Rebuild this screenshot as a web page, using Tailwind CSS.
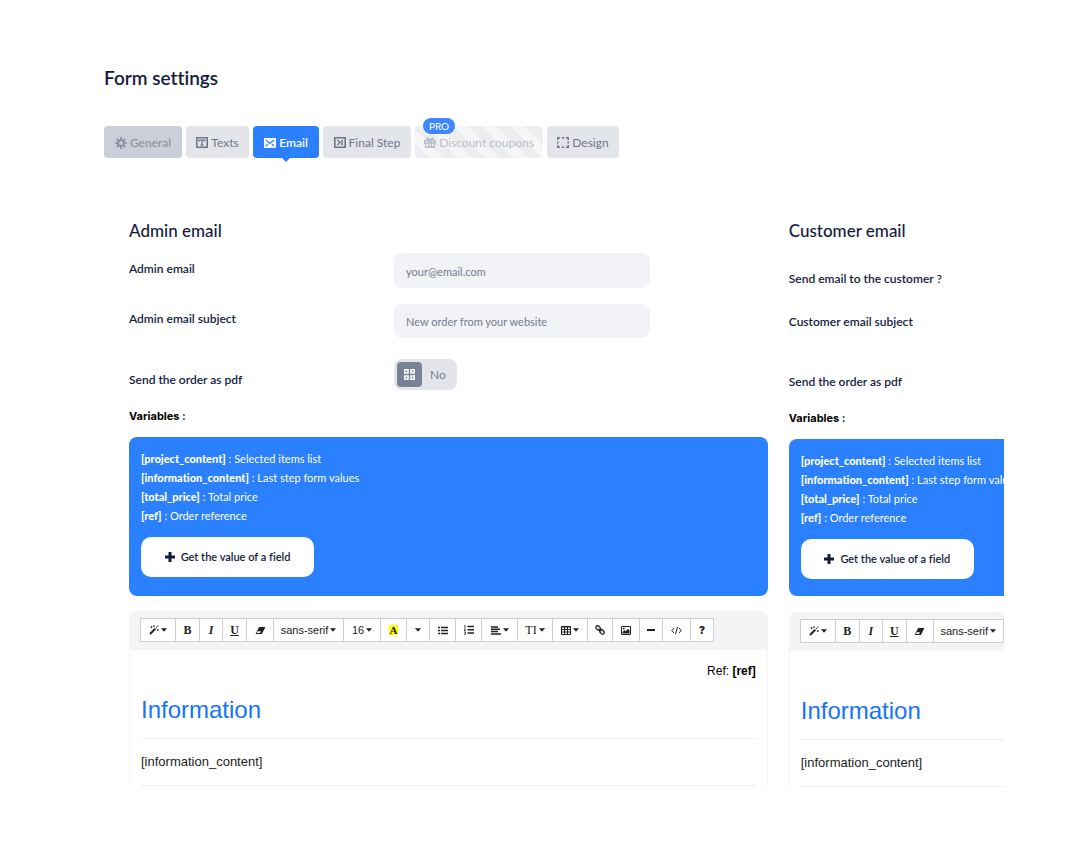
<!DOCTYPE html>
<html lang="en">
<head>
<meta charset="utf-8">
<meta name="viewport" content="width=device-width, initial-scale=1">
<title>Form settings</title>
<script src="https://cdn.jsdelivr.net/npm/@tailwindcss/browser@4"></script>
</head>
<body class="bg-white font-[Lato,sans-serif] text-[#131b3d] [font-variant-ligatures:none]">
<svg class="hidden" aria-hidden="true">
  <symbol id="wand" viewBox="0 0 12 12"><path d="M1.2 10.8 7.5 4.5" stroke="currentColor" stroke-width="2.400"/><path d="M8 4 10 2M3 1.5v2M2 2.500h2M6 .6v1.600M5.200 1.400h1.600M10.500 5v2M9.500 6h2M10.800 .6v1.200" stroke="currentColor" stroke-width="1.200"/></symbol>
  <symbol id="caret" viewBox="0 0 6 4"><path d="M0 .3h6L3 3.700z" fill="currentColor"/></symbol>
  <symbol id="eraser" viewBox="0 0 12 10"><path d="M4.500 1h7L7.500 9h-7z" fill="currentColor"/><path d="M2.900 5.900h3.600L5.500 7.800H1.900z" fill="#fff"/></symbol>
  <symbol id="plus" viewBox="0 0 10 10"><path d="M3.500 0h3v3.500H10v3H6.500V10h-3V6.500H0v-3h3.500z" fill="currentColor"/></symbol>
</svg>
<main class="pt-[66px] pl-[104px] pr-[68px]">
  <h1 class="text-[19px] leading-6 font-semibold">Form settings</h1>
  <nav class="mt-9 flex gap-1 text-[12px] text-[#6f768b] [&>button]:pt-px">
    <button class="flex h-8 w-[78px] items-center justify-center gap-[3px] rounded bg-[#cbcfd9] text-[#858ca0]">
      <svg class="size-3" viewBox="0 0 12 12" fill="none" stroke="currentColor"><circle cx="6" cy="6" r="2.900" stroke-width="1.900"/><path d="M6 0v2.500M6 9.500V12M0 6h2.500M9.500 6H12M1.800 1.800l1.700 1.700M8.500 8.500l1.700 1.700M1.800 10.200l1.700-1.700M8.500 3.500l1.700-1.700" stroke-width="1.700"/></svg>General</button>
    <button class="flex h-8 w-[63px] items-center justify-center gap-[3px] rounded bg-[#e4e5eb]">
      <svg class="h-[11px] w-3" viewBox="0 0 12 11" fill="none" stroke="currentColor"><path d="M.800 .800h10.400v9.400H.800z" stroke-width="1.600"/><path d="M3.200 4.500V3.200h5.600v1.300M6 3v5.500M4.500 8.200h3" stroke-width="1.300"/></svg>Texts</button>
    <button class="relative flex h-8 w-[66px] items-center justify-center gap-[3px] rounded bg-[#2a80ff] font-semibold text-white">
      <svg class="h-[10px] w-3" viewBox="0 0 12 10"><path d="M0 0h12v10H0z" fill="#fff"/><path d="m2 2 4 3.500L10 2M2 8l2-2M10 8 8 6" fill="none" stroke="#2a80ff" stroke-width="1.200"/></svg>Email
      <svg class="absolute top-full left-[29px] -mt-px h-[5px] w-2" viewBox="0 0 8 5"><path d="M0 0h8v1L4 5 0 1z" fill="#2a80ff"/></svg></button>
    <button class="flex h-8 w-[88px] items-center justify-center gap-[3px] rounded bg-[#e4e5eb]">
      <svg class="h-[11px] w-3" viewBox="0 0 12 11" fill="none" stroke="currentColor"><path d="M.800 .800h10.400v9.400H.800z" stroke-width="1.600"/><path d="m3.500 3 2.500 2.500L3.500 8M8 2.800v5.400" stroke-width="1.400"/></svg>Final Step</button>
    <button class="relative flex h-8 w-[128px] items-center justify-center gap-[3px] rounded bg-[repeating-linear-gradient(45deg,#ededf0_0px,#ededf0_10px,#f5f6f8_10px,#f5f6f8_20px)] text-[#b9bdc9]">
      <svg class="h-[11px] w-3" viewBox="0 0 12 11" fill="none" stroke="currentColor" stroke-width="1.400"><path d="M.700 3.600h10.600V6H.700zM1.600 6v4.300h8.800V6M4.700 3.600v6.700M7.300 3.600v6.700M6 3.200C4 .2 2.500.4 3 2.400l3 .8 3-.8C9.500.4 8 .2 6 3.200"/></svg>Discount coupons
      <span class="absolute -top-2 left-2 h-4 w-8 rounded-full bg-[#3f87ff] text-center text-[10px] leading-4 text-white">PRO</span></button>
    <button class="flex h-8 w-[72px] items-center justify-center gap-[3px] rounded bg-[#e4e5eb]">
      <svg class="h-[11px] w-3" viewBox="0 0 12 11" fill="none" stroke="currentColor" stroke-width="1.500"><path d="M3 .8H.8V3M9 .8h2.200V3M.8 8v2.200H3M11.200 8v2.200H9M4.800.8h2.400M4.800 10.200h2.400M.8 4.500v2M11.200 4.500v2"/></svg>Design</button>
  </nav>

  <div class="mt-[61px] flex h-[568px] gap-[21px] overflow-hidden pl-[25px]">
    <section class="flex w-[73%] shrink-0 flex-col">
      <h2 class="text-[17px] leading-6 font-medium">Admin email</h2>
      <div class="mt-[10px] flex items-start">
        <label for="mail" class="w-[265px] pt-2 text-[12px] leading-4 font-semibold">Admin email</label>
        <input id="mail" type="email" placeholder="your@email.com" class="h-[35px] w-[40%] rounded-lg bg-[#f2f3f6] px-3 pt-px text-[11px] placeholder:text-[#737b90]">
      </div>
      <div class="mt-4 flex items-start">
        <label for="subject" class="w-[265px] pt-[7px] text-[12px] leading-4 font-semibold">Admin email subject</label>
        <input id="subject" type="text" placeholder="New order from your website" class="h-[34px] w-[40%] rounded-lg bg-[#f2f3f6] px-3 pt-px text-[11px] placeholder:text-[#737b90]">
      </div>
      <div class="mt-[21px] flex items-start">
        <label for="pdf" class="w-[265px] pt-[13px] text-[12px] leading-4 font-semibold">Send the order as pdf</label>
        <label class="flex h-[31px] w-[63px] items-center gap-2 rounded-lg bg-[#e4e5eb] pl-[3px] text-[12px] text-[#737b90]">
          <input id="pdf" type="checkbox" class="sr-only">
          <span class="flex size-[25px] items-center justify-center rounded bg-[#788196]"><svg class="size-[11px]" viewBox="0 0 11 11" fill="none" stroke="#fff" stroke-width="1.600"><path d="M.8.8h3.200v3.200H.8zM7 .8h3.200v3.200H7zM.8 7h3.200v3.200H.8zM7 7h3.200v3.200H7z"/></svg></span>No</label>
      </div>
      <p class="mt-[18px] font-[Inter,sans-serif] text-[11px] leading-4 font-bold text-black">Variables :</p>
      <div class="mt-[13px] h-[159px] rounded-lg bg-[#2a80ff] px-3 pt-3 text-[11px] text-white">
        <ul class="leading-[19px]">
          <li><b class="font-black">[project_content]</b> : Selected items list</li>
          <li><b class="font-black">[information_content]</b> : Last step form values</li>
          <li><b class="font-black">[total_price]</b> : Total price</li>
          <li><b class="font-black">[ref]</b> : Order reference</li>
        </ul>
        <button class="mt-3 flex h-10 w-[173px] items-center justify-center gap-[6px] rounded-[10px] bg-white font-semibold text-[#131b3d]"><svg class="size-[10px]"><use href="#plus"/></svg>Get the value of a field</button>
      </div>
      <div class="mt-[15px] h-[39px] rounded-t-lg bg-[#f4f4f5] px-[11px] pt-[7px]">
        <div class="flex h-6 text-[10px] text-[#222] [&>button]:flex [&>button]:shrink-0 [&>button]:items-center [&>button]:justify-center [&>button]:gap-[2px] [&>button]:border-y [&>button]:border-r [&>button]:border-[#cfcfcf] [&>button]:bg-white">
          <button aria-label="Style" class="w-9 border-l"><svg class="size-[10px]"><use href="#wand"/></svg><svg class="h-1 w-[6px]"><use href="#caret"/></svg></button>
          <button class="w-6 font-['Liberation_Serif',serif] text-[12px] font-bold">B</button>
          <button class="w-[23px] font-['Liberation_Serif',serif] text-[12px] font-bold italic">I</button>
          <button class="w-6 font-['Liberation_Serif',serif] text-[12px] font-bold underline">U</button>
          <button aria-label="Clear" class="w-[27px]"><svg class="h-[9px] w-[11px]"><use href="#eraser"/></svg></button>
          <button class="w-[70px] font-['Liberation_Sans',sans-serif] text-[11px]">sans-serif<svg class="h-1 w-[6px]"><use href="#caret"/></svg></button>
          <button class="w-[37px] font-['Liberation_Sans',sans-serif] text-[11px]">16<svg class="h-1 w-[6px]"><use href="#caret"/></svg></button>
          <button class="w-[26px] font-['Liberation_Serif',serif] text-[11px] font-bold"><span class="bg-[#ff0] px-px leading-[10px]">A</span></button>
          <button aria-label="More colors" class="w-[23px]"><svg class="h-1 w-[6px]"><use href="#caret"/></svg></button>
          <button aria-label="Bullets" class="w-[26px]"><svg class="h-[9px] w-[10px]" viewBox="0 0 10 9" stroke="currentColor" stroke-width="1.500"><path d="M0 1.500h2M3 1.500h7M0 4.500h2M3 4.500h7M0 7.500h2M3 7.500h7"/></svg></button>
          <button aria-label="Numbers" class="w-[26px]"><svg class="h-[10px] w-[10px]" viewBox="0 0 10 10" fill="none" stroke="currentColor"><path d="M3.500 1.500H10M3.500 4.700H10M3.500 8H10" stroke-width="1.500"/><path d="M0 .6h1v2.400M0 4h1.500L.3 5.700h1.500M0 7h1.500v2.400H0" stroke-width=".8"/></svg></button>
          <button aria-label="Align" class="w-9"><svg class="h-[9px] w-[10px]" viewBox="0 0 10 9" stroke="currentColor" stroke-width="1.500"><path d="M0 1h7M0 3.300h9M0 5.600h7M0 8h10"/></svg><svg class="h-1 w-[6px]"><use href="#caret"/></svg></button>
          <button class="w-[35px] font-['Liberation_Serif',serif] text-[12px]">TI<svg class="h-1 w-[6px]"><use href="#caret"/></svg></button>
          <button aria-label="Table" class="w-[35px]"><svg class="h-[9px] w-[10px]" viewBox="0 0 10 9" fill="none" stroke="currentColor"><path d="M.5.5h9v8h-9zM0 1h10M.5 3.500h9M.5 6h9M3.500 1v7M6.500 1v7"/></svg><svg class="h-1 w-[6px]"><use href="#caret"/></svg></button>
          <button aria-label="Link" class="w-[25px]"><svg class="size-[10px]" viewBox="0 0 10 10" fill="none" stroke="currentColor" stroke-width="1.300"><g transform="rotate(45 5 5)"><rect x="-.2" y="3.200" width="5" height="3.400" rx="1.700"/><rect x="5.200" y="3.200" width="5" height="3.400" rx="1.700"/><path d="M3 5h4"/></g></svg></button>
          <button aria-label="Picture" class="w-[27px]"><svg class="h-[9px] w-[10px]" viewBox="0 0 10 9"><path d="M.5.5h9v8h-9z" fill="none" stroke="currentColor"/><path d="M1.500 7.500V6l2-2 1.200 1.200L7 2.800l1.500 1.700v3z" fill="currentColor"/><circle cx="2.800" cy="2.500" r=".9" fill="currentColor"/></svg></button>
          <button aria-label="Line" class="w-[23px]"><svg class="h-[2px] w-2" viewBox="0 0 8 2"><path d="M0 0h8v2H0z" fill="currentColor"/></svg></button>
          <button aria-label="Code" class="w-7"><svg class="h-[9px] w-[11px]" viewBox="0 0 11 9" fill="none" stroke="currentColor"><path d="M3 2 .8 4.500 3 7M8 2l2.200 2.500L8 7M6.500 .800l-2 7.400"/></svg></button>
          <button class="w-[23px] font-[Inter,sans-serif] font-black">?</button>
        </div>
      </div>
      <div class="flex-1 border-x border-[#f4f4f5] px-[11px] font-['Liberation_Sans',sans-serif] text-black">
        <p class="pt-3 text-right text-[12px] leading-[18px]">Ref: <b>[ref]</b></p>
        <h3 class="mt-[14px] text-[24px] leading-8 text-[#1673ff]">Information</h3>
        <hr class="mt-3 border-[#efefef]">
        <p class="mt-[14px] text-[13px] leading-[18px] text-[#222]">[information_content]</p>
        <hr class="mt-[14px] border-[#efefef]">
      </div>
    </section>

    <section class="flex w-[73%] shrink-0 flex-col">
      <h2 class="text-[17px] leading-6 font-medium">Customer email</h2>
      <p class="mt-7 text-[12px] leading-4 font-semibold">Send email to the customer ?</p>
      <p class="mt-[27px] text-[12px] leading-4 font-semibold">Customer email subject</p>
      <p class="mt-11 text-[12px] leading-4 font-semibold">Send the order as pdf</p>
      <p class="mt-5 font-[Inter,sans-serif] text-[11px] leading-4 font-bold text-black">Variables :</p>
      <div class="mt-[13px] h-[159px] rounded-lg bg-[#2a80ff] px-3 pt-3 text-[11px] text-white">
        <ul class="leading-[19px]">
          <li><b class="font-black">[project_content]</b> : Selected items list</li>
          <li><b class="font-black">[information_content]</b> : Last step form values</li>
          <li><b class="font-black">[total_price]</b> : Total price</li>
          <li><b class="font-black">[ref]</b> : Order reference</li>
        </ul>
        <button class="mt-3 flex h-10 w-[173px] items-center justify-center gap-[6px] rounded-[10px] bg-white font-semibold text-[#131b3d]"><svg class="size-[10px]"><use href="#plus"/></svg>Get the value of a field</button>
      </div>
      <div class="mt-4 h-[39px] rounded-t-lg bg-[#f4f4f5] px-[11px] pt-[7px]">
        <div class="flex h-6 text-[10px] text-[#222] [&>button]:flex [&>button]:shrink-0 [&>button]:items-center [&>button]:justify-center [&>button]:gap-[2px] [&>button]:border-y [&>button]:border-r [&>button]:border-[#cfcfcf] [&>button]:bg-white">
          <button aria-label="Style" class="w-9 border-l"><svg class="size-[10px]"><use href="#wand"/></svg><svg class="h-1 w-[6px]"><use href="#caret"/></svg></button>
          <button class="w-6 font-['Liberation_Serif',serif] text-[12px] font-bold">B</button>
          <button class="w-[23px] font-['Liberation_Serif',serif] text-[12px] font-bold italic">I</button>
          <button class="w-6 font-['Liberation_Serif',serif] text-[12px] font-bold underline">U</button>
          <button aria-label="Clear" class="w-[27px]"><svg class="h-[9px] w-[11px]"><use href="#eraser"/></svg></button>
          <button class="w-[70px] font-['Liberation_Sans',sans-serif] text-[11px]">sans-serif<svg class="h-1 w-[6px]"><use href="#caret"/></svg></button>
        </div>
      </div>
      <div class="flex-1 border-x border-[#f4f4f5] px-[11px] font-['Liberation_Sans',sans-serif] text-black">
        <h3 class="mt-11 text-[24px] leading-8 text-[#1673ff]">Information</h3>
        <hr class="mt-3 border-[#efefef]">
        <p class="mt-[14px] text-[13px] leading-[18px] text-[#222]">[information_content]</p>
        <hr class="mt-[14px] border-[#efefef]">
      </div>
    </section>
  </div>
</main>
</body>
</html>
